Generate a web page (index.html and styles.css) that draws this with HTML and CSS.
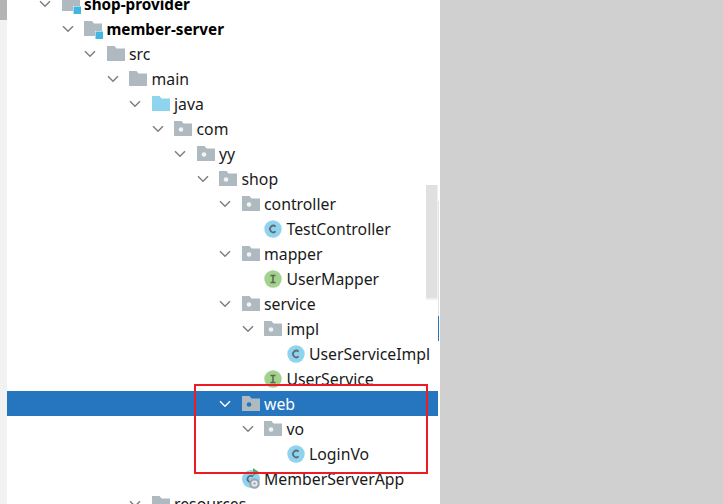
FILE: index.html
```html
<!DOCTYPE html>
<html lang="en">
<head>
<meta charset="utf-8">
<title>Project tree</title>
<link rel="stylesheet" href="styles.css">
</head>
<body>
<svg class="defs" aria-hidden="true">
  <symbol id="chev" viewBox="0 0 12 8"><path d="M1 1.2 6 6.2 11 1.2" fill="none" stroke="currentColor" stroke-width="1.5"/></symbol>
  <symbol id="folder" viewBox="0 0 18 15"><path d="M0 0H7.5L9.5 2.5H18V15H0Z" fill="#aeb9c0"/></symbol>
  <symbol id="src" viewBox="0 0 18 15"><path d="M0 0H7.5L9.5 2.5H18V15H0Z" fill="#8ed4ee"/></symbol>
  <symbol id="pkg" viewBox="0 0 18 15"><path d="M0 0H7.5L9.5 2.5H18V15H0Z" fill="#aeb9c0"/><circle cx="7" cy="8.5" r="2.3" fill="#f2f4f5"/></symbol>
  <symbol id="pkgsel" viewBox="0 0 18 15"><path d="M0 0H7.5L9.5 2.5H18V15H0Z" fill="#aeb9c0"/><circle cx="7" cy="8.5" r="2.3" fill="#2675bf"/></symbol>
  <symbol id="mod" viewBox="0 0 19 19"><path d="M0 0H8L10 2.5H18V15H0Z" fill="#aeb9c0"/><rect x="11" y="10" width="8" height="8" fill="#fff"/><rect x="11.5" y="10.5" width="7.5" height="7.5" fill="#40b6e0"/></symbol>
  <symbol id="cls" viewBox="0 0 18 18"><circle cx="9" cy="9" r="8.7" fill="#8fd3ee"/><path d="M11.6 6.6A3.3 3.3 0 1 0 11.6 11.4" fill="none" stroke="#5d6b75" stroke-width="1.7"/></symbol>
  <symbol id="ifc" viewBox="0 0 18 18"><circle cx="9" cy="9" r="8.7" fill="#a3d18e"/><path d="M6.5 5.5H11.5M9 5.5V12.5M6.5 12.5H11.5" fill="none" stroke="#5a6650" stroke-width="1.5"/></symbol>
  <symbol id="app" viewBox="0 0 24 24"><circle cx="10" cy="12" r="9" fill="#8fd3ee"/><path d="M12 9.5A3.3 3.3 0 1 0 12 14.5" fill="none" stroke="#5d6b75" stroke-width="1.7"/><path d="M12 1 18 5 12 9Z" fill="#59a869"/><circle cx="13.5" cy="16.5" r="4.2" fill="#e8ecee" stroke="#9aa7b0" stroke-width="2.2"/><circle cx="13.5" cy="16.5" r="1.2" fill="#9aa7b0"/></symbol>
</svg>

<div class="window">
  <div class="gutter"><div class="gutter-thumb"></div></div>
  <main class="tree">
    <div class="row d0"><svg class="chev"><use href="#chev"/></svg><svg class="ico mod"><use href="#mod"/></svg><span class="bold">shop-provider</span></div>
    <div class="row d1"><svg class="chev"><use href="#chev"/></svg><svg class="ico mod"><use href="#mod"/></svg><span class="bold">member-server</span></div>
    <div class="row d2"><svg class="chev"><use href="#chev"/></svg><svg class="ico"><use href="#folder"/></svg><span>src</span></div>
    <div class="row d3"><svg class="chev"><use href="#chev"/></svg><svg class="ico"><use href="#folder"/></svg><span>main</span></div>
    <div class="row d4"><svg class="chev"><use href="#chev"/></svg><svg class="ico"><use href="#src"/></svg><span>java</span></div>
    <div class="row d5"><svg class="chev"><use href="#chev"/></svg><svg class="ico"><use href="#pkg"/></svg><span>com</span></div>
    <div class="row d6"><svg class="chev"><use href="#chev"/></svg><svg class="ico"><use href="#pkg"/></svg><span>yy</span></div>
    <div class="row d7"><svg class="chev"><use href="#chev"/></svg><svg class="ico"><use href="#pkg"/></svg><span>shop</span></div>
    <div class="row d8"><svg class="chev"><use href="#chev"/></svg><svg class="ico"><use href="#pkg"/></svg><span>controller</span></div>
    <div class="row d9 leaf"><svg class="ico round"><use href="#cls"/></svg><span>TestController</span></div>
    <div class="row d8"><svg class="chev"><use href="#chev"/></svg><svg class="ico"><use href="#pkg"/></svg><span>mapper</span></div>
    <div class="row d9 leaf"><svg class="ico round"><use href="#ifc"/></svg><span>UserMapper</span></div>
    <div class="row d8"><svg class="chev"><use href="#chev"/></svg><svg class="ico"><use href="#pkg"/></svg><span>service</span></div>
    <div class="row d9"><svg class="chev"><use href="#chev"/></svg><svg class="ico"><use href="#pkg"/></svg><span>impl</span></div>
    <div class="row d10 leaf"><svg class="ico round"><use href="#cls"/></svg><span>UserServiceImpl</span></div>
    <div class="row d9 leaf"><svg class="ico round"><use href="#ifc"/></svg><span>UserService</span></div>
    <div class="row d8 selected"><svg class="chev"><use href="#chev"/></svg><svg class="ico"><use href="#pkgsel"/></svg><span>web</span></div>
    <div class="row d9"><svg class="chev"><use href="#chev"/></svg><svg class="ico"><use href="#pkg"/></svg><span>vo</span></div>
    <div class="row d10 leaf"><svg class="ico round"><use href="#cls"/></svg><span>LoginVo</span></div>
    <div class="row d8 leaf"><svg class="ico app"><use href="#app"/></svg><span>MemberServerApp</span></div>
    <div class="row d4"><svg class="chev"><use href="#chev"/></svg><svg class="ico"><use href="#folder"/></svg><span>resources</span></div>
  </main>
  <div class="scroll-thumb"></div>
  <div class="scroll-line"></div>
  <div class="scroll-mark"></div>
  <div class="highlight"></div>
  <aside class="side"></aside>
</div>
</body>
</html>
```
FILE: styles.css
```css
* { box-sizing: border-box; }
html, body { margin: 0; height: 100%; overflow: hidden; background: #fff; }
.defs { position: absolute; width: 0; height: 0; }
.window { position: relative; display: flex; width: 723px; height: 504px; overflow: hidden; }
.gutter { flex: 0 0 7px; background: #f2f2f2; }
.gutter-thumb { height: 20px; background: #b4b4b4; }
.tree { flex: 0 0 431px; margin: -9px 2px 0 0; font-family: "Noto Sans", sans-serif; font-size: 15.8px; }
.side { flex: 1; background: #d0d0d0; }
.row { display: flex; align-items: center; height: 25px; white-space: nowrap; color: #1a1a1a; }
.d0 { padding-left: 32px; }
.d1 { padding-left: 54.5px; }
.d2 { padding-left: 77px; }
.d3 { padding-left: 99.5px; }
.d4 { padding-left: 122px; }
.d5 { padding-left: 144.5px; }
.d6 { padding-left: 167px; }
.d7 { padding-left: 189.5px; }
.d8 { padding-left: 212px; }
.d9 { padding-left: 234.5px; }
.d10 { padding-left: 257px; }
.leaf { margin-left: 22.5px; }
.chev { flex: none; width: 12px; height: 8px; margin-right: 10.5px; color: #7f7f7f; }
.ico { flex: none; width: 18px; height: 15px; margin-right: 4.5px; }
.ico.mod { width: 19px; height: 19px; margin-right: 3.5px; margin-top: 4px; }
.ico.round { width: 18px; height: 18px; }
.ico.app { width: 24px; height: 24px; margin-left: -1px; margin-right: -0.5px; }
.bold { font-size: 15.25px; font-weight: 700; color: #000; }
.selected { background: #2675bf; color: #fff; }
.selected .chev { color: #fff; }
.scroll-thumb { position: absolute; left: 426px; top: 185px; width: 12px; height: 115px; background: #e0e0e0; border: solid #f0f0f0; border-width: 0 1px 2px 0; }
.scroll-line { position: absolute; left: 438px; top: 201px; width: 1px; height: 115px; background: #e4e4e4; }
.scroll-mark { position: absolute; left: 438px; top: 316px; width: 1px; height: 25px; background: #2675bf; }
.highlight { position: absolute; left: 194px; top: 384px; width: 234px; height: 90px; border: 2px solid #ed1c24; }
```
